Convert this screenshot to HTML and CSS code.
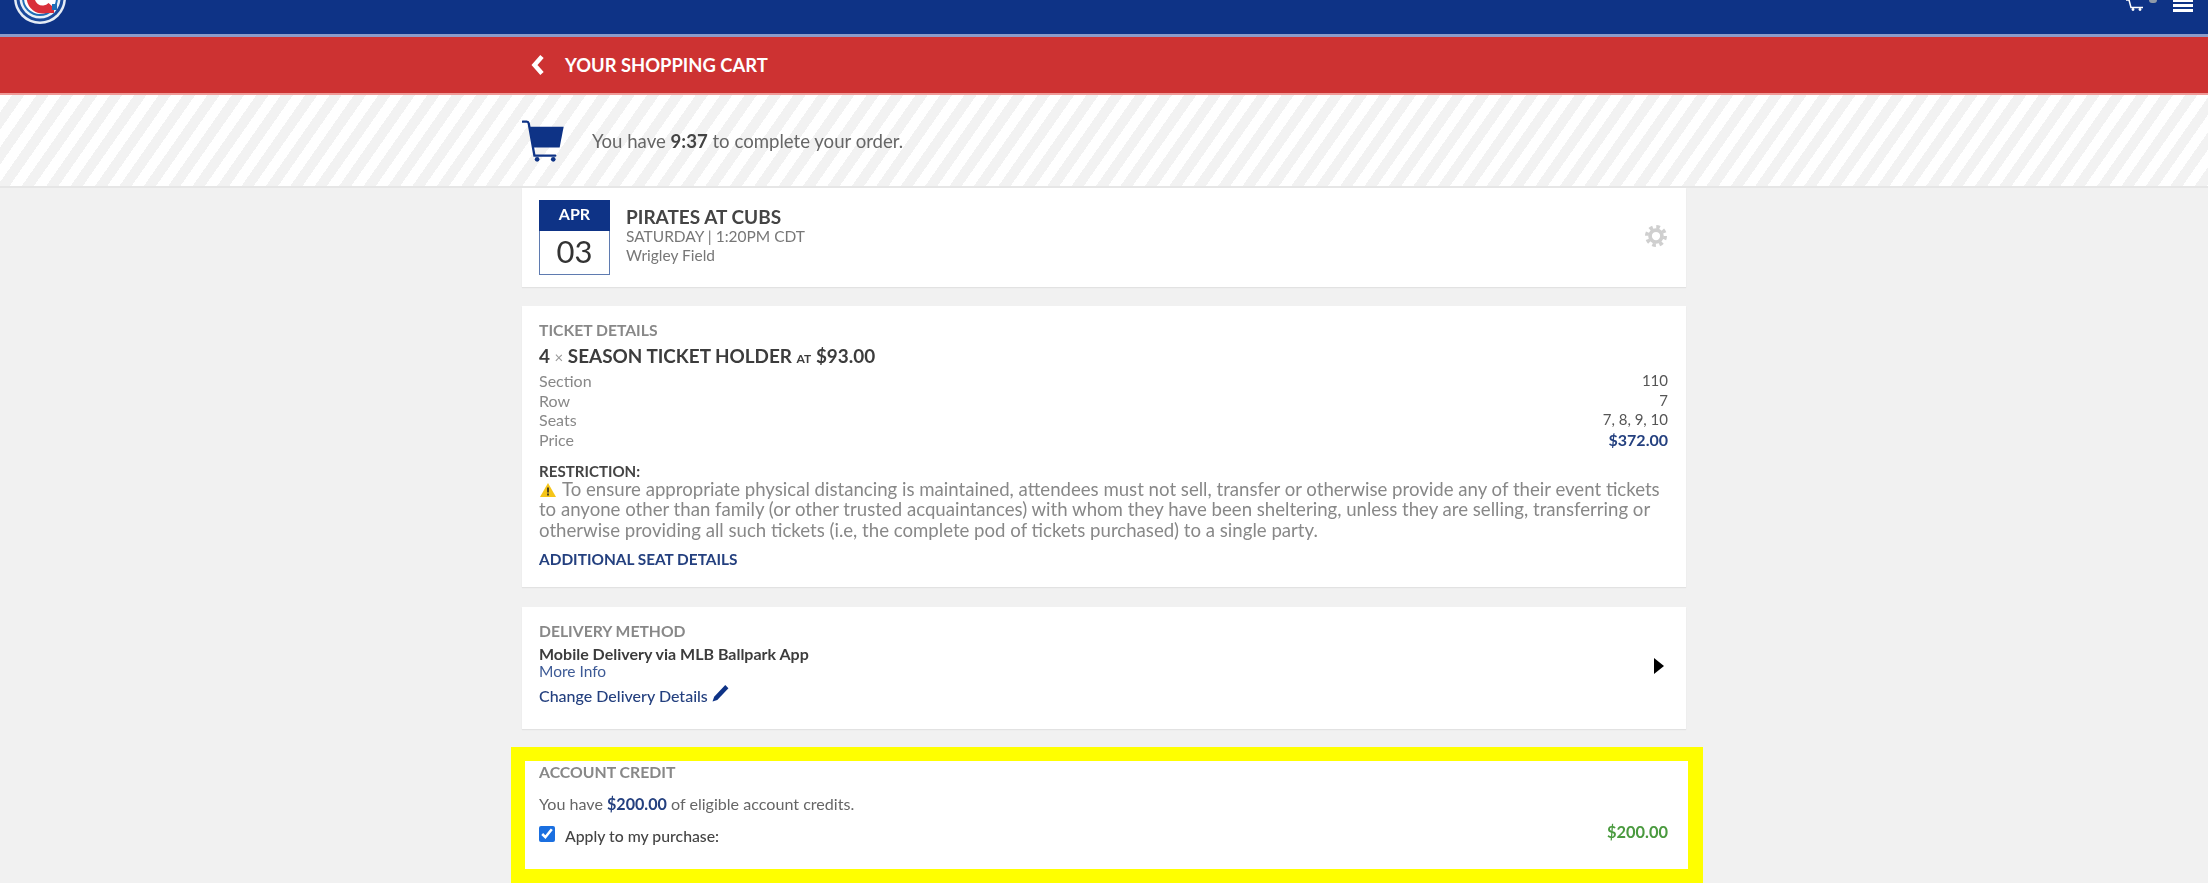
FILE: index.html
```html
<!DOCTYPE html>
<html lang="en">
<head>
<meta charset="utf-8">
<title>Your Shopping Cart</title>
<link rel="stylesheet" href="styles.css">
</head>
<body>
<div class="page">
  <header class="topbar">
    <svg class="logo" viewBox="-27 -27 54 54" aria-hidden="true">
      <circle r="26" fill="#e6edf6"/>
      <circle r="23.500" fill="#1b4a9c"/>
      <circle r="20.500" fill="#e8f0f8"/>
      <circle r="18" fill="#1f6db5"/>
      <circle r="16" fill="#fff"/>
      <path d="M10 9.500A12 12 0 1 1 10-9.500" transform="rotate(-10)" fill="none" stroke="#d92f3a" stroke-width="8"/>
      <path d="M3 11h11v4H3z" fill="#d92f3a"/>
      <path d="M12 12h5V6h-5z" fill="#1f6db5"/>
    </svg>
    <div class="topbar-right">
      <svg class="mini-cart" viewBox="0 0 22 11" aria-hidden="true">
        <path d="M1 0h3l2 7.500h12" fill="none" stroke="#fff" stroke-width="1.500"/>
        <circle cx="8" cy="9.500" r="1.400" fill="#fff"/>
        <circle cx="15" cy="9.500" r="1.400" fill="#fff"/>
      </svg>
      <span class="mini-badge"></span>
      <span class="burger"><i></i><i></i><i></i></span>
    </div>
  </header>

  <div class="redbar">
    <div class="column redbar-inner">
      <svg class="chevron" viewBox="0 0 15 20" aria-hidden="true"><path d="M11 1.500L3.500 10l7.500 8.500" fill="none" stroke="#fff" stroke-width="4.500"/></svg>
      <h1 class="redbar-title">YOUR SHOPPING CART</h1>
    </div>
  </div>

  <div class="timer">
    <div class="column timer-inner">
      <svg class="big-cart" viewBox="20 88 125 125" aria-hidden="true">
        <path d="M22 93h12q5 0 6 5l17 96h62" fill="none" stroke="#0e3386" stroke-width="7" stroke-linecap="round"/>
        <path d="M42 108h102l-12 62H54z" fill="#0e3386"/>
        <circle cx="65" cy="205" r="7" fill="#0e3386"/>
        <circle cx="113" cy="205" r="7" fill="#0e3386"/>
      </svg>
      <p class="timer-text">You have <b>9:37</b> to complete your order.</p>
    </div>
  </div>

  <main class="column">
    <section class="card event">
      <div class="date">
        <div class="date-month">APR</div>
        <div class="date-day">03</div>
      </div>
      <div class="event-info">
        <div class="event-title">PIRATES AT CUBS</div>
        <div class="event-sub">SATURDAY | 1:20PM CDT</div>
        <div class="event-sub">Wrigley Field</div>
      </div>
      <svg class="gear" viewBox="0 0 24 24" aria-hidden="true">
        <circle cx="12" cy="12" r="10" fill="none" stroke="#cfcfcf" stroke-width="4" stroke-dasharray="4 3.854"/>
        <circle cx="12" cy="12" r="6.500" fill="none" stroke="#cfcfcf" stroke-width="4"/>
      </svg>
    </section>

    <section class="card tickets">
      <h2 class="label">TICKET DETAILS</h2>
      <div class="ticket-title">4 <span class="times">×</span> SEASON TICKET HOLDER <small>AT</small> $93.00</div>
      <dl class="rows">
        <div class="row"><dt>Section</dt><dd>110</dd></div>
        <div class="row"><dt>Row</dt><dd>7</dd></div>
        <div class="row"><dt>Seats</dt><dd>7, 8, 9, 10</dd></div>
        <div class="row"><dt>Price</dt><dd class="price">$372.00</dd></div>
      </dl>
      <div class="restriction-label">RESTRICTION:</div>
      <p class="restriction"><svg class="warn" viewBox="0 0 16 14" aria-hidden="true"><path d="M8 0l8 14H0z" fill="#f5c518"/><path d="M7.200 4.500h1.600v5H7.200zM7.200 10.500h1.600v2H7.200z" fill="#222"/></svg>To ensure appropriate physical distancing is maintained, attendees must not sell, transfer or otherwise provide any of their event tickets to anyone other than family (or other trusted acquaintances) with whom they have been sheltering, unless they are selling, transferring or otherwise providing all such tickets (i.e, the complete pod of tickets purchased) to a single party.</p>
      <a class="more-seat">ADDITIONAL SEAT DETAILS</a>
    </section>

    <section class="card delivery">
      <div class="delivery-body">
        <h2 class="label">DELIVERY METHOD</h2>
        <div class="delivery-name">Mobile Delivery via MLB Ballpark App</div>
        <a class="more-info">More Info</a>
        <a class="change">Change Delivery Details
          <svg class="pencil" viewBox="0 0 16 17" aria-hidden="true"><path d="M12.500 1l3 3L5 15 .5 16.500 2 12z" fill="#0e3386"/></svg>
        </a>
      </div>
      <span class="arrow"></span>
    </section>

    <section class="credit">
      <h2 class="label">ACCOUNT CREDIT</h2>
      <p class="credit-text">You have <b>$200.00</b> of eligible account credits.</p>
      <div class="credit-row">
        <label class="apply"><input class="check" type="checkbox" checked> Apply to my purchase:</label>
        <span class="credit-amount">$200.00</span>
      </div>
    </section>
  </main>
</div>
</body>
</html>
```
FILE: styles.css
```css
* { box-sizing: border-box; }
html, body { margin: 0; height: 883px; overflow: hidden; }
body { background: #f1f1f1; font-family: Lato, "Open Sans", sans-serif; color: #444; }
.page { filter: blur(0.5px); }
.column { width: 1164px; margin: 0 auto; }
h1, h2, p, dl, dd { margin: 0; }

.topbar { height: 37px; background: #0e3386; border-bottom: 3px solid #8c9bc8; display: flex; justify-content: space-between; overflow: hidden; }
.logo { width: 54px; height: 54px; flex: none; align-self: flex-end; margin: 0 0 9px 13px; }
.topbar-right { display: flex; align-items: flex-start; margin-right: 15px; }
.mini-cart { width: 22px; height: 11px; }
.mini-badge { width: 8px; height: 3px; margin: 0 16px 0 2px; border-radius: 0 0 4px 4px; background: #8f9aa8; }
.burger { width: 20px; display: flex; flex-direction: column; gap: 2px; margin-top: -1px; }
.burger i { height: 3px; background: #fff; }

.redbar { height: 58px; background: #cd3232; border-bottom: 2px solid #ef9a97; }
.redbar-inner { height: 56px; display: flex; align-items: center; }
.chevron { width: 15px; height: 20px; margin: 0 19px 0 9px; }
.redbar-title { font-size: 18.400px; font-weight: 700; color: #fff; line-height: 20px; }

.timer { height: 93px; border-bottom: 2px solid #e6e6e6; background: repeating-linear-gradient(125deg, #fff 0 10px, #f2f2f2 10px 20px); }
.timer-inner { height: 91px; display: flex; align-items: center; }
.big-cart { width: 42px; height: 42px; margin: 0 28px 0 0; }
.timer-text { font-size: 18.600px; color: #666; }
.timer-text b { color: #444; }

.card { background: #fff; box-shadow: 0 1px 1px #e2e2e2; }
.label { font-size: 15.700px; line-height: 20px; font-weight: 700; color: #888; }

.event { height: 99px; padding: 12px 18px 0 17px; display: flex; align-items: flex-start; }
.date { width: 71px; height: 75px; border: 1px solid #5f7bb0; flex: none; }
.date-month { height: 31px; margin: -1px -1px 0; background: #0e3386; color: #fff; font-size: 16px; font-weight: 700; text-align: center; line-height: 28px; }
.date-day { font-size: 31px; color: #333; text-align: center; line-height: 40px; }
.event-info { flex: 1; margin: 7px 0 0 16px; }
.event-title { font-size: 19px; font-weight: 700; line-height: 20px; color: #444; }
.event-sub { font-size: 15.500px; line-height: 19px; color: #777; }
.gear { width: 22px; height: 22px; margin: 25px 1px 0 0; }

.tickets { height: 281px; margin-top: 19px; padding: 14px 18px 0 17px; }
.ticket-title { margin-top: 4px; font-size: 18.900px; line-height: 24px; font-weight: 700; color: #3c3c3c; }
.times { font-weight: 400; font-size: 15px; color: #999; }
.ticket-title small { font-size: 12px; }
.row { display: flex; justify-content: space-between; line-height: 19.700px; font-size: 16px; }
.row dt { color: #888; }
.row dd { color: #555; font-size: 15px; }
.row .price { color: #24407f; font-weight: 700; font-size: 16px; }
.restriction-label { margin-top: 11px; font-size: 15.100px; line-height: 20px; font-weight: 700; color: #444; }
.restriction { margin-top: -2px; font-size: 18.620px; line-height: 20.500px; color: #888; }
.warn { width: 16px; height: 14px; margin: 0 6px 0 1px; vertical-align: -1px; }
.more-seat { display: block; margin-top: 9px; font-size: 15.400px; line-height: 20px; font-weight: 700; color: #24407f; }

.delivery { height: 122px; margin-top: 20px; padding: 14px 22px 0 17px; display: flex; justify-content: space-between; }
.delivery-name { margin-top: 4px; font-size: 16px; line-height: 18px; font-weight: 700; color: #3c3c3c; }
.more-info { display: block; font-size: 15.500px; line-height: 16px; color: #3d5a96; }
.change { display: block; margin-top: 5px; font-size: 16px; line-height: 20px; font-weight: 500; color: #24407f; }
.pencil { width: 17px; height: 18px; vertical-align: 0; }
.arrow { width: 0; height: 0; margin-top: 37px; border-style: solid; border-width: 8px 0 8px 10px; border-color: transparent transparent transparent #000; }

.credit { height: 136px; margin: 18px -17px 0 -11px; padding: 1px 20px 0 14px; background: #fff; border: 14px solid #ff0; border-right-width: 15px; }
.credit .label { font-size: 15.800px; }
.credit-text { margin-top: 12px; font-size: 16.100px; line-height: 20px; color: #666; }
.credit-text b { color: #24407f; }
.credit-row { margin-top: 10px; display: flex; justify-content: space-between; }
.apply { display: flex; align-items: center; gap: 9px; height: 22px; font-size: 15.800px; font-weight: 500; color: #444; }
.check { width: 16px; height: 16px; margin: -3px 1px 0 0; accent-color: #1a6fe0; }
.credit-amount { font-size: 16.400px; line-height: 16px; font-weight: 700; color: #4a9a3f; }
```
